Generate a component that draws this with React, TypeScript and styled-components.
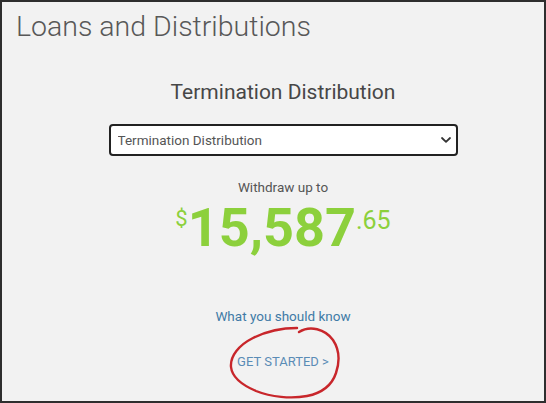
import React from "react";
import styled, { createGlobalStyle } from "styled-components";

const GlobalStyle = createGlobalStyle`
  html, body {
    margin: 0;
    padding: 0;
    background: #f2f2f2;
  }
  body {
    font-family: Roboto, "Liberation Sans", Arial, sans-serif;
  }
  * { box-sizing: border-box; }
`;

const Frame = styled.div`
  width: 546px;
  height: 403px;
  border: 2px solid #2e2e2e;
  background: #f2f2f2;
  display: flex;
  flex-direction: column;
  overflow: hidden;
`;

const PageTitle = styled.h1`
  margin: 11px 0 0 14px;
  font-family: Roboto, "Liberation Sans", sans-serif;
  font-weight: 300;
  font-size: 28.5px;
  line-height: 1;
  color: #585858;
`;

const Content = styled.div`
  display: flex;
  flex-direction: column;
  align-items: center;
  padding-left: 20px;
`;

const Heading = styled.h2`
  margin: 40px 0 0;
  font-family: Roboto, "Liberation Sans", sans-serif;
  font-weight: 400;
  font-size: 21px;
  line-height: 1;
  color: #474747;
`;

const SelectWrap = styled.div`
  position: relative;
  margin-top: 21px;
  width: 349px;
  height: 32px;
`;

const Select = styled.select`
  appearance: none;
  -webkit-appearance: none;
  width: 100%;
  height: 100%;
  border: 2px solid #222;
  border-radius: 4px;
  background: #fff;
  padding: 0 28px 0 7px;
  font-family: Roboto, "Liberation Sans", sans-serif;
  font-size: 13.5px;
  color: #555;
  outline: none;
`;

const Chevron = styled.svg`
  position: absolute;
  right: 7px;
  top: 13px;
  pointer-events: none;
`;

const Label = styled.div`
  margin-top: 25px;
  font-size: 13.5px;
  line-height: 1;
  color: #555;
`;

const Amount = styled.div`
  margin-top: 7px;
  display: flex;
  align-items: flex-start;
  color: #8cd03c;
  line-height: 1;
`;

const Currency = styled.span`
  margin-top: 7px;
  font-size: 22px;
  font-weight: 400;
  line-height: 1;
`;

const Dollars = styled.span`
  font-size: 54px;
  font-weight: 700;
  line-height: 1;
`;

const Cents = styled.span`
  margin-top: 6.5px;
  font-size: 25px;
  font-weight: 400;
  line-height: 1;
`;

const InfoLink = styled.a`
  margin-top: 55px;
  font-size: 13.5px;
  line-height: 1;
  color: #3f7aa6;
  text-decoration: none;
`;

const StartWrap = styled.div`
  position: relative;
  margin-top: 31px;
`;

const StartLink = styled.a`
  display: block;
  font-size: 13px;
  line-height: 1;
  color: #5a8cb6;
  text-decoration: none;
`;

const Circle = styled.svg`
  position: absolute;
  left: -10px;
  top: -33px;
  overflow: visible;
  pointer-events: none;
`;

export default function App() {
  return (
    <>
      <GlobalStyle />
      <Frame>
        <PageTitle>Loans and Distributions</PageTitle>
        <Content>
          <Heading>Termination Distribution</Heading>
          <SelectWrap>
            <Select defaultValue="termination">
              <option value="termination">Termination Distribution</option>
            </Select>
            <Chevron width="10" height="6" viewBox="0 0 10 6">
              <path d="M1 1 L5 4.8 L9 1" fill="none" stroke="#333" strokeWidth="1.8" strokeLinecap="round" strokeLinejoin="round" />
            </Chevron>
          </SelectWrap>
          <Label>Withdraw up to</Label>
          <Amount>
            <Currency>$</Currency>
            <Dollars>15,587</Dollars>
            <Cents>.65</Cents>
          </Amount>
          <InfoLink href="#">What you should know</InfoLink>
          <StartWrap>
            <StartLink href="#">GET STARTED &gt;</StartLink>
            <Circle width="117" height="80" viewBox="0 0 117 80">
              <path
                d="M72 10 C83 3, 98 7, 106 18 C112 27, 113 39, 109 51 C105 63, 95 71, 80 74 C64 77, 44 75, 29 69 C15 63, 5 55, 4 45 C3 34, 12 23, 26 16 C38 10, 52 6, 70 6"
                fill="none"
                stroke="#c8262b"
                strokeWidth="2.4"
                strokeLinecap="round"
              />
            </Circle>
          </StartWrap>
        </Content>
      </Frame>
    </>
  );
}
